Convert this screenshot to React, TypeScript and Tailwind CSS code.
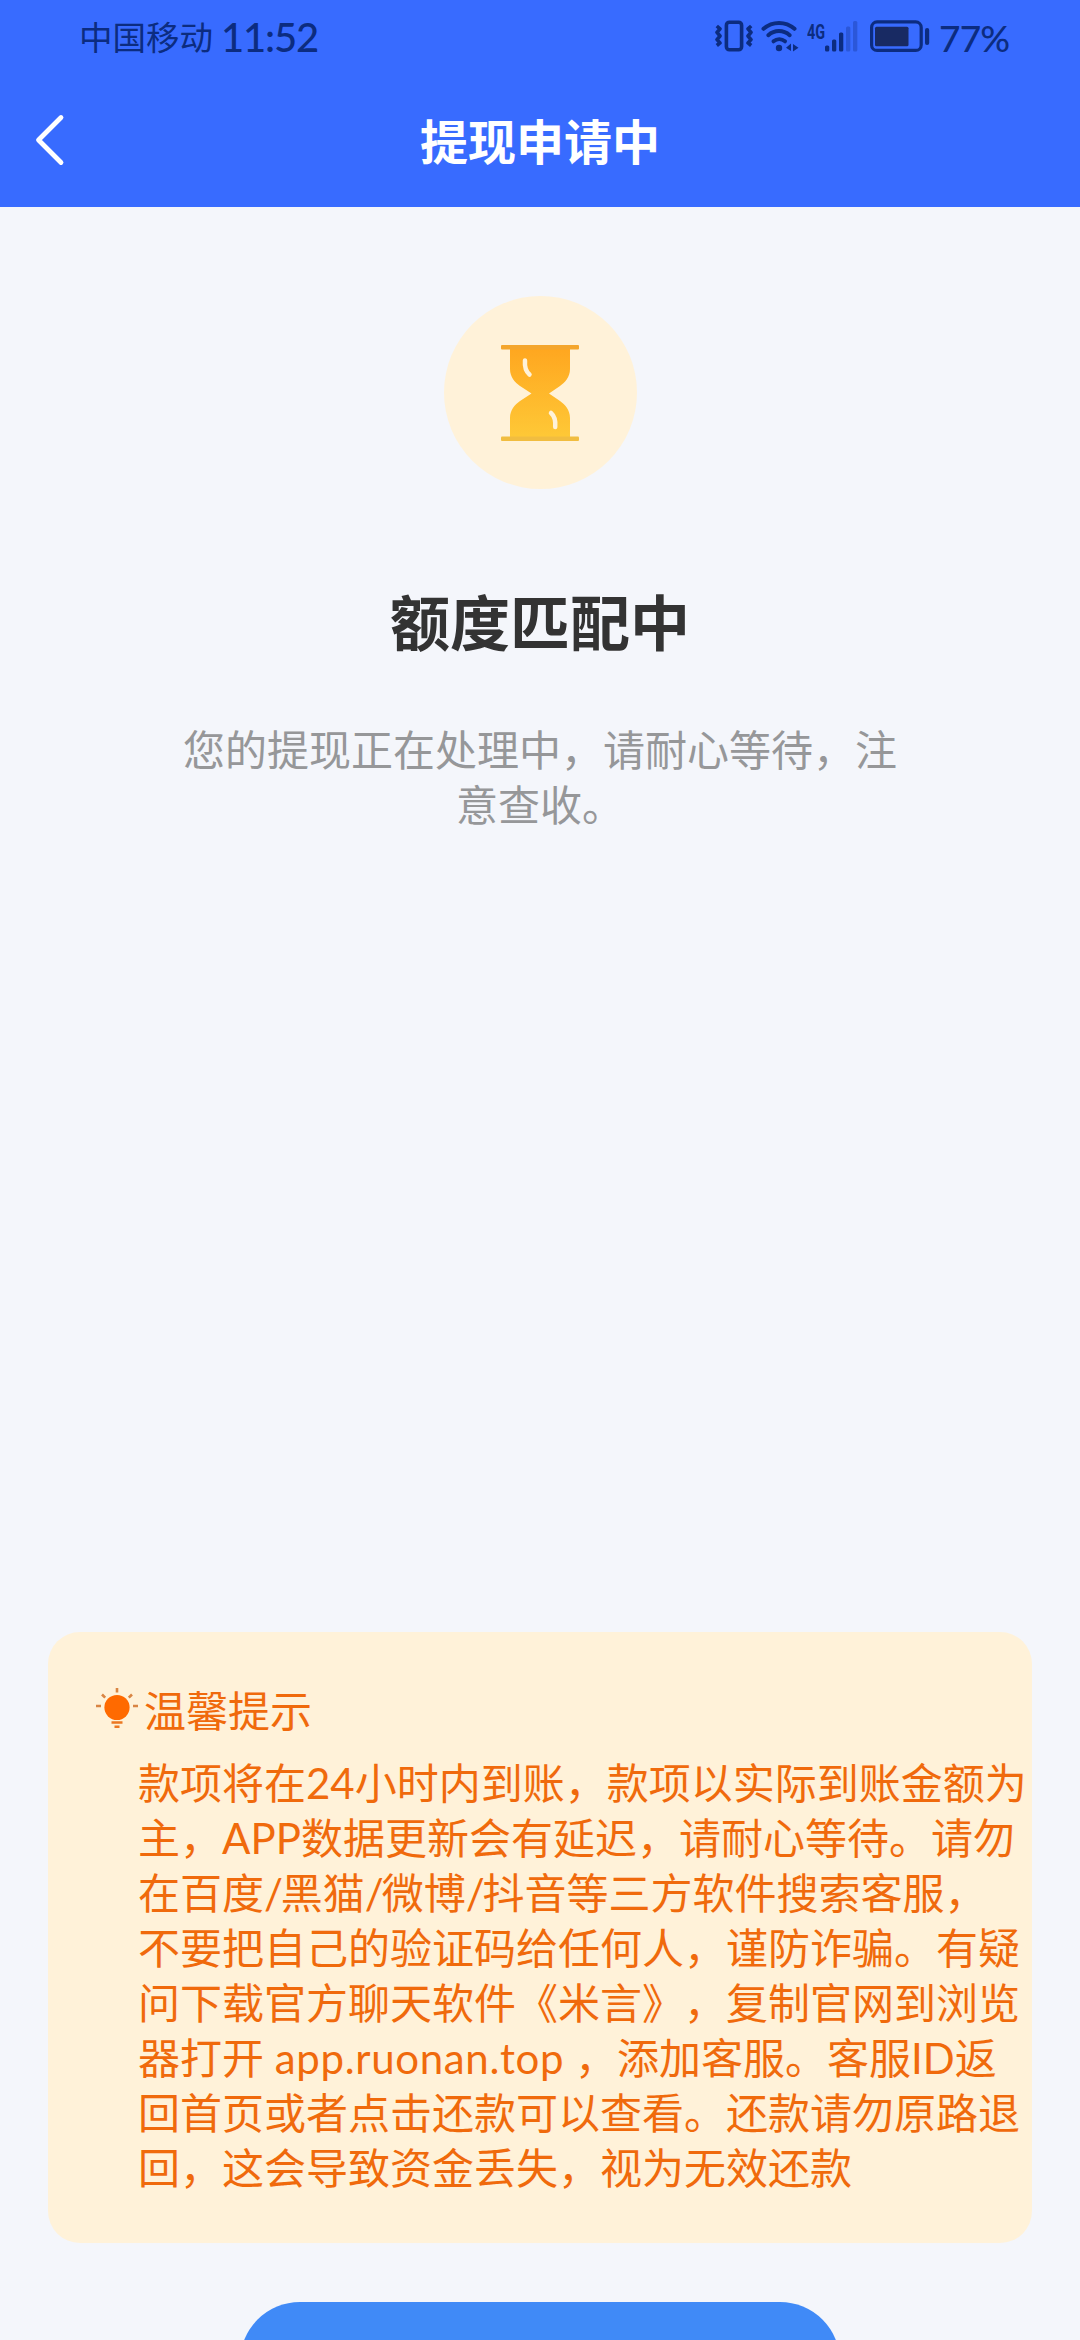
import React from 'react';

const tipLines = [
  '款项将在24小时内到账，款项以实际到账金额为',
  '主，APP数据更新会有延迟，请耐心等待。请勿',
  '在百度/黑猫/微博/抖音等三方软件搜索客服，',
  '不要把自己的验证码给任何人，谨防诈骗。有疑',
  '问下载官方聊天软件《米言》，复制官网到浏览',
  '器打开 app.ruonan.top ，添加客服。客服ID返',
  '回首页或者点击还款可以查看。还款请勿原路退',
  '回，这会导致资金丢失，视为无效还款',
];

const VibrateIcon = () => (
  <svg width="38" height="32" viewBox="0 0 38 32" fill="none" stroke="currentColor" strokeWidth="3.6">
    <rect x="11.4" y="2.2" width="15.2" height="27.6" rx="3" />
    <path d="M1.8 6l3.2 2.8-3 3.6 3 3.6-3 3.6 3 3.3-3.2 2.6" strokeLinejoin="round" />
    <path d="M36.2 6L33 8.8l3 3.6-3 3.6 3 3.6-3 3.3 3.2 2.6" strokeLinejoin="round" />
  </svg>
);

const WifiIcon = () => (
  <svg width="38" height="32" viewBox="0 0 38 32" fill="none" stroke="currentColor" strokeWidth="4" strokeLinecap="round">
    <path d="M2.5 8.8C11.5.9 24.5.9 33.5 8.8" />
    <path d="M7.3 15.2c6.3-5.5 15-5.5 21.4 0" />
    <path d="M12.5 21.3c3.5-2.9 8-2.9 11.5 0" />
    <circle cx="18" cy="28" r="3.2" fill="currentColor" stroke="none" />
    <path d="M30 23.5v7.500l-5-3.3z M32 24v7.500l5.500-3.8z" fill="currentColor" stroke="none" />
  </svg>
);

const SignalIcon = () => (
  <svg width="33" height="32" viewBox="0 0 33 32" fill="currentColor">
    <rect x="0" y="25.5" width="4.3" height="6" rx="1.5" />
    <rect x="7" y="19.5" width="4.3" height="12" rx="1.5" />
    <rect x="14" y="12.5" width="4.3" height="19" rx="1.5" />
    <rect x="21" y="6.5" width="4.3" height="25" rx="1.5" opacity="0.3" />
    <rect x="28" y="1" width="4.3" height="30.5" rx="1.5" opacity="0.3" />
  </svg>
);

const BatteryIcon = () => (
  <svg width="60" height="32" viewBox="0 0 60 32">
    <rect x="1.6" y="1.9" width="49.6" height="28.5" rx="5.5" fill="none" stroke="currentColor" strokeWidth="3.2" />
    <rect x="5" y="6.8" width="33.5" height="19.5" rx="1.5" fill="#182a63" />
    <rect x="55" y="8" width="4.2" height="17" rx="2.1" fill="currentColor" />
  </svg>
);

const HourglassIcon = () => (
  <svg width="78" height="98" viewBox="0 0 78 98">
    <defs>
      <linearGradient id="sand" x1="0" y1="0" x2="0" y2="1">
        <stop offset="0" stopColor="#ffa61f" />
        <stop offset="1" stopColor="#fec937" />
      </linearGradient>
    </defs>
    <path
      d="M9 3h60v22c0 8-5 13.5-10 17l-11 7.5 11 7.5c5 3.5 10 9 10 17v21H9V74c0-8 5-13.5 10-17l11.5-7.5L19 42C14 38.5 9 33 9 25z"
      fill="url(#sand)"
    />
    <rect x="0" y="1" width="78" height="4.5" rx="1" fill="#f4a62d" />
    <rect x="0" y="92.5" width="78" height="4.5" rx="1" fill="#f1bd40" />
    <path d="M24 16.5c-.6 7 1 11 4.5 14" fill="none" stroke="#fff2d9" strokeWidth="4.5" strokeLinecap="round" />
    <path d="M50 69c3.5 3 4.8 7 4.2 14" fill="none" stroke="#fff2d9" strokeWidth="4.5" strokeLinecap="round" />
  </svg>
);

const BulbIcon = () => (
  <svg width="42" height="42" viewBox="0 0 42 42">
    <circle cx="21" cy="19.5" r="12.6" fill="#ff6a00" />
    <g stroke="#d98543" strokeWidth="2.6">
      <path d="M21 0v4.5M6 6.5l3.2 3.2M36 6.5l-3.2 3.2M0 18h5M37 18h5" />
    </g>
    <g stroke="#ec7822" strokeWidth="2.6">
      <path d="M15.5 34.5h11M18.5 38.8h5" />
    </g>
  </svg>
);

const StatusBar = () => (
  <div className="flex h-[72px] items-start justify-between pl-[79px] pr-[72px] text-[#0c2c80]">
    <div className="flex items-start">
      <span className="mt-[12px] text-[33.5px] leading-[48px]">中国移动</span>
      <span className="ml-[8px] mt-[13px] font-[Lato] text-[40px] font-medium leading-[48px] tracking-[-1.2px]">11:52</span>
    </div>
    <div className="flex items-start pt-5">
      <VibrateIcon />
      <div className="ml-[8px]"><WifiIcon /></div>
      <div className="ml-[8px] h-4 w-[18px]">
        <span className="inline-block origin-left scale-x-[0.72] font-[Roboto] text-[20px] font-bold leading-4">4G</span>
      </div>
      <SignalIcon />
      <div className="ml-[12px]"><BatteryIcon /></div>
      <span className="-mt-[6px] ml-[9px] w-[69px] whitespace-nowrap font-[Lato] text-[37px] font-medium leading-[48px] tracking-[-0.8px]">77%</span>
    </div>
  </div>
);

// Latin runs get their own tracking inside the Chinese text
const TipLine = ({ text }: { text: string }) => (
  <p className="h-[55px] whitespace-pre leading-[55px]">
    {text.split(/(\/|app\.ruonan\.top)/).map((part, i) => {
      if (part === '/') return <span key={i} className="tracking-[-2.2px]">/</span>;
      if (part.startsWith('app')) return <span key={i} className="tracking-[0.65px]">{part}</span>;
      return part;
    })}
  </p>
);

const App = () => {
  return (
    <div className="flex h-[2340px] w-[1080px] flex-col overflow-hidden bg-[#f4f6fb] font-['Noto_Sans_CJK_SC',sans-serif] [text-spacing-trim:space-all]">
      {/* Page Header */}
      <header className="h-[207px] shrink-0 bg-[#386bff]">
        <StatusBar />
        <div className="grid h-[135px] grid-cols-[120px_1fr_120px] items-start">
          <button className="pl-[34px] pt-[41px] text-white">
            <svg width="32" height="54" viewBox="0 0 32 54" fill="none" stroke="currentColor" strokeWidth="4.8" strokeLinecap="round" strokeLinejoin="round">
              <path d="M27 4.5L4.5 27 27 49.5" />
            </svg>
          </button>
          <h1 className="pt-[31px] text-center text-[48px] font-bold leading-[72px] text-white">提现申请中</h1>
        </div>
      </header>

      {/* Status */}
      <section className="flex flex-col items-center pt-[89px]">
        <div className="flex h-[193px] w-[193px] items-center justify-center rounded-full bg-[#fff2d9]">
          <HourglassIcon />
        </div>
        <h2 className="mt-[87px] text-[60px] font-bold leading-[88px] text-[#333333]">额度匹配中</h2>
        <p className="mt-[56px] w-[720px] text-center text-[42px] leading-[55px] text-[#969799]">
          您的提现正在处理中，请耐心等待，注
          <br />
          意查收。
        </p>
      </section>

      {/* Tips */}
      <section className="mx-[48px] mt-auto h-[611px] shrink-0 rounded-[32px] bg-[#fff2d9] pt-[47px] text-[42px] text-[#f06a0c]">
        <div className="flex h-[60px] items-center pl-[48px]">
          <BulbIcon />
          <span className="ml-[6px] leading-[60px]">温馨提示</span>
        </div>
        <div className="mt-[17px] pl-[90px] font-[Lato,'Noto_Sans_CJK_SC',sans-serif]">
          {tipLines.map((line) => (
            <TipLine key={line} text={line} />
          ))}
        </div>
      </section>

      <div className="mt-[59px] flex h-[38px] shrink-0 justify-center overflow-hidden">
        <button className="h-[120px] w-[600px] shrink-0 rounded-full bg-[#408af7]" />
      </div>
    </div>
  );
};

export default App;
